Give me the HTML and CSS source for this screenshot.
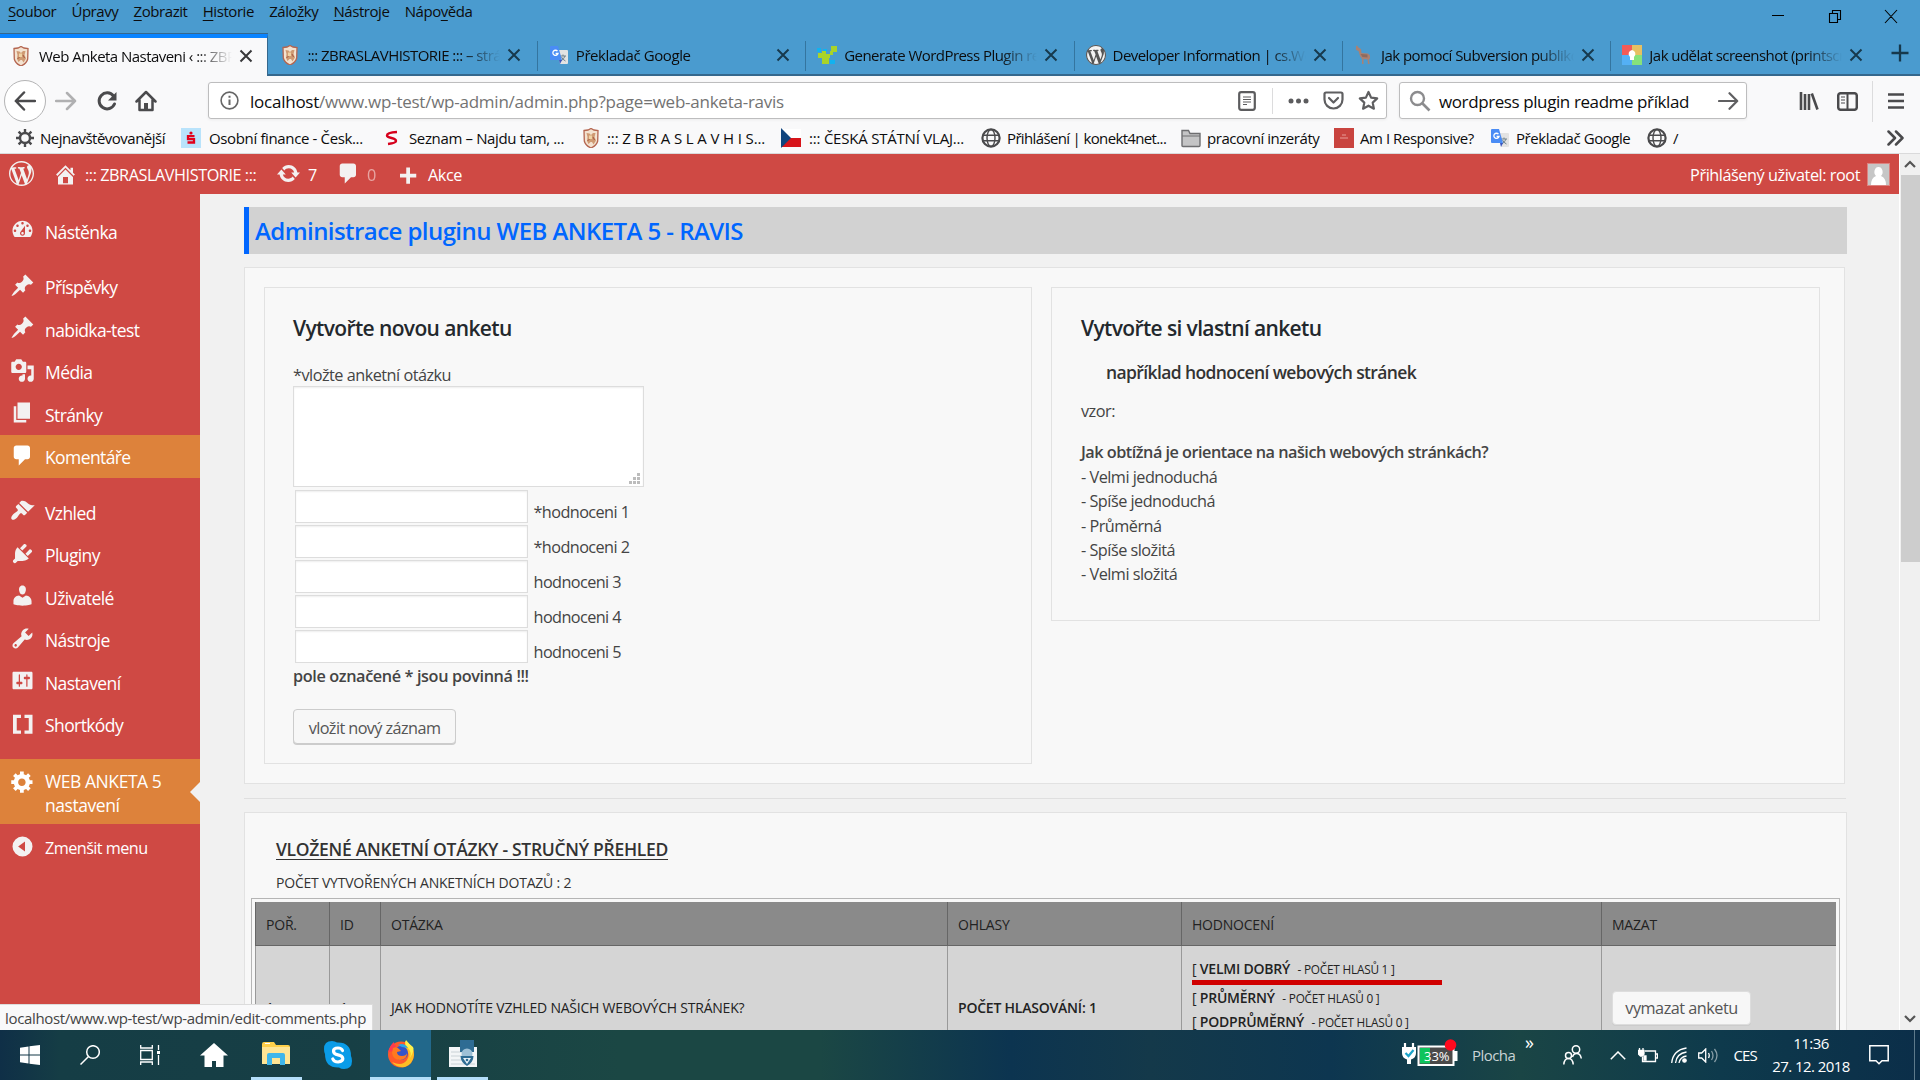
FILE: index.html
```html
<!DOCTYPE html>
<html lang="cs">
<head>
<meta charset="utf-8">
<title>Web Anketa Nastaveni</title>
<link rel="stylesheet" href="styles.css">
</head>
<body>
<svg class="defs" width="0" height="0">
  <symbol id="close" viewBox="0 0 14 14"><path d="M1.5 1.5l11 11M12.500 1.500l-11 11" stroke="currentColor" stroke-width="2" fill="none"/></symbol>
  <symbol id="crest" viewBox="0 0 20 20"><path d="M3 2.500l4-.5 3-1.500 3 1.500 4 .5-.3 10.500q-1 4.500-6.700 7-5.700-2.500-6.700-7z" fill="#f3e2d0" stroke="#b4654f" stroke-width="1.300"/><path d="M5.500 5l3 .5 1.500 1.500 2-2h2.500l-1 4 1.500 3.500-2.500 4-1.500-2.500H9.500l-2 2-1.500-3 .5-4z" fill="#cf9a72"/><path d="M8 7.500h3v3.500H8z" fill="#efd3a4"/><path d="M6.500 13l2-2M12 9l1.500 3" stroke="#a5563f" stroke-width="1"/></symbol>
  <symbol id="gtr" viewBox="0 0 20 20"><path d="M8 5h10q1 0 1 1v12q0 1-1 1h-7z" fill="#e3e3e3"/><path d="M11 11h6M14 9.500V11M16 11q-1 3-4 5M12.500 12q1 2.500 4 4" stroke="#70828c" fill="none"/><path d="M2 1h7l4 14H2q-1 0-1-1V2q0-1 1-1z" fill="#4a8cf5"/><path d="M10 15h3l-2 4z" fill="#3a56c0"/><path d="M8.500 6.200A2.600 2.600 0 1 0 9 8.500H6.600" fill="none" stroke="#fff" stroke-width="1.300"/></symbol>
  <symbol id="globe" viewBox="0 0 20 20"><g fill="none" stroke="#4a4a4c"><circle cx="10" cy="10" r="8.600" stroke-width="2.200"/><ellipse cx="10" cy="10" rx="4" ry="8.500" stroke-width="1.400"/><path d="M2 7.200h16M2 12.800h16" stroke-width="1.400"/></g></symbol>
  <symbol id="wp" viewBox="0 0 20 20"><path d="M20 10c0-5.510-4.490-10-10-10C4.480 0 0 4.490 0 10c0 5.520 4.480 10 10 10 5.510 0 10-4.480 10-10zM7.780 15.370L4.370 6.220c.55-.02 1.170-.08 1.170-.08.5-.06.44-1.130-.06-1.110 0 0-1.450.11-2.370.11-.18 0-.37 0-.58-.01C4.120 2.690 6.870 1.110 10 1.110c2.330 0 4.450.87 6.050 2.340-.68-.11-1.650.39-1.650 1.580 0 .74.45 1.360.9 2.100.35.61.55 1.360.55 2.460 0 1.490-1.400 5-1.400 5l-3.030-8.370c.54-.02.82-.17.82-.17.5-.05.44-1.250-.06-1.220 0 0-1.440.12-2.380.12-.87 0-2.330-.12-2.330-.12-.5-.03-.56 1.200-.06 1.220l.92.08 1.260 3.410zM17.410 10c.24-.64.74-1.870.43-4.250.7 1.290 1.050 2.710 1.050 4.250 0 3.290-1.730 6.240-4.400 7.780.97-2.590 1.940-5.200 2.920-7.780zM6.100 18.090C3.120 16.650 1.110 13.530 1.110 10c0-1.300.23-2.480.72-3.590C3.250 10.300 4.670 14.200 6.100 18.090zm4.030-6.630l2.580 6.980c-.86.29-1.760.45-2.710.45-.79 0-1.570-.11-2.290-.33.81-2.380 1.620-4.740 2.420-7.100z"/></symbol>
  <symbol id="pin" viewBox="0 0 20 20"><path d="M10.440 3.020l1.820-1.820 6.360 6.350-1.830 1.820c-1.050-.68-2.480-.57-3.410.36l-.75.75c-.92.93-1.040 2.350-.35 3.410l-1.830 1.820-2.410-2.410-2.800 2.790c-.42.42-3.380 2.710-3.800 2.290s1.860-3.390 2.280-3.810l2.790-2.790L4.100 9.360l1.830-1.820c1.050.69 2.480.57 3.400-.36l.75-.75c.93-.92 1.050-2.350.36-3.410z"/></symbol>
  <symbol id="bubble" viewBox="0 0 20 20"><path d="M5 2h9c1.100 0 2 .9 2 2v7c0 1.100-.9 2-2 2h-2l-5 5v-5H5c-1.100 0-2-.9-2-2V4c0-1.100.9-2 2-2z"/></symbol>
</svg>

<div class="menubar">
  <nav class="menus"><span><u>S</u>oubor</span><span>Úpr<u>a</u>vy</span><span><u>Z</u>obrazit</span><span><u>H</u>istorie</span><span>Zálo<u>ž</u>ky</span><span><u>N</u>ástroje</span><span>Nápo<u>v</u>ěda</span></nav>
  <svg class="winctl" width="130" height="20" viewBox="0 0 130 20" fill="none" stroke="#000" stroke-width="1.100"><path d="M0 9.500h12M60.500 7.500V4.500h8v9h-3M57.500 7.500h8v9h-8zM113 4l12 13M125 4l-12 13"/></svg>
</div>

<div class="tabs">
  <div class="tab active"><svg class="fav"><use href="#crest"/></svg><span class="label">Web Anketa Nastaveni ‹ ::: ZBRASLAVHISTORIE</span><svg class="x"><use href="#close"/></svg></div>
  <div class="tab nosep"><svg class="fav"><use href="#crest"/></svg><span class="label">::: ZBRASLAVHISTORIE ::: – stránky</span><svg class="x"><use href="#close"/></svg></div>
  <div class="tab"><svg class="fav"><use href="#gtr"/></svg><span class="label short">Překladač Google</span><svg class="x"><use href="#close"/></svg></div>
  <div class="tab"><svg class="fav" viewBox="0 0 20 20"><path d="M0 3h4v4H0zM6 4h4v3H6zM13 15h5v4h-5z" fill="#11b2f0"/><path d="M14 1h6v6h-4v3h-3v3h-1v6H5v-6H1V8h4V6h4v3h4V6h1z" fill="#a9d32a"/></svg><span class="label">Generate WordPress Plugin readme</span><svg class="x"><use href="#close"/></svg></div>
  <div class="tab"><svg class="fav" viewBox="0 0 20 20"><circle cx="10" cy="10" r="9.800" fill="#f3f3f3"/><use href="#wp" fill="#555" width="20" height="20"/></svg><span class="label">Developer Information | cs.WordPress</span><svg class="x"><use href="#close"/></svg></div>
  <div class="tab"><svg class="fav" viewBox="0 0 20 20"><path d="M2 1l1-.5L5 3l2 1 .5 4 6.500.5 2 2v3l-1 1 .5 4.500H14l-.5-4.500-4-.5V19H8v-5l-2-3-1.500-5L2 5z" fill="#a98274"/><path d="M6.500 9l7 .5v3l-5-.5z" fill="#8f6a5d"/></svg><span class="label">Jak pomocí Subversion publikovat</span><svg class="x"><use href="#close"/></svg></div>
  <div class="tab"><svg class="fav" viewBox="0 0 20 20"><path d="M0 0h10v10H0z" fill="#f35b57"/><path d="M10 0h10v10H10z" fill="#e6c063"/><path d="M0 10h10v10H0z" fill="#54b0f5"/><path d="M10 10h10v10H10z" fill="#86e27b"/><path d="M10 5a4 4 0 0 1 2 7v3H8v-3a4 4 0 0 1 2-7z" fill="#fff"/></svg><span class="label">Jak udělat screenshot (printscreen)</span><svg class="x"><use href="#close"/></svg></div>
  <svg class="newtab" viewBox="0 0 18 18"><path d="M9 .5v17M.5 9h17" stroke="#16384c" stroke-width="2.300"/></svg>
</div>

<div class="toolbar">
  <div class="back"><svg width="22" height="20" viewBox="0 0 22 20"><path d="M21 10H2M10 1.500L1.800 10l8.200 8.500" class="ln"/></svg></div>
  <svg class="fwd" width="22" height="20" viewBox="0 0 22 20"><path d="M1 10h19M12 2l8 8-8 8" class="ln faint"/></svg>
  <svg class="reload" width="22" height="22" viewBox="0 0 22 22"><path d="M17.500 6A8 8 0 1 0 18.500 14" class="ln thick"/><path d="M20.500 2v8.500H12z" fill="#4a4a4c"/></svg>
  <svg class="home" width="22" height="22" viewBox="0 0 22 22"><path d="M1.500 11.500L11 2l9.500 9.500M4.500 10v10h13V10" class="ln"/><path d="M9 13h4v7H9z" fill="#4a4a4c"/></svg>
  <div class="urlbar">
    <svg width="19" height="19" viewBox="0 0 19 19"><circle cx="9.500" cy="9.500" r="8.400" fill="none" stroke="#666" stroke-width="1.600"/><path d="M9.500 8.500V14M9.500 4.800v2" stroke="#666" stroke-width="2"/></svg>
    <span class="url"><b>localhost</b>/www.wp-test/wp-admin/admin.php?page=web-anketa-ravis</span>
    <svg class="reader" width="18" height="20" viewBox="0 0 18 20"><rect x="1.200" y="1.200" width="15.600" height="17.600" rx="2" fill="none" stroke="#5c5c5e" stroke-width="2.200"/><path d="M5 6h8M5 8.500h8M5 11h8M5 13.500h4" stroke="#5c5c5e" stroke-width="1.200"/></svg>
    <i class="vsep"></i>
    <svg class="dots" width="21" height="6" viewBox="0 0 21 6" fill="#5c5c5e"><circle cx="3" cy="3" r="2.500"/><circle cx="10.500" cy="3" r="2.500"/><circle cx="18" cy="3" r="2.500"/></svg>
    <svg class="pocket" width="21" height="20" viewBox="0 0 21 20"><path d="M1.500 3q0-1.500 1.500-1.500h15q1.500 0 1.500 1.500v5.500a9 9 0 0 1-18 0z" class="ln grey"/><path d="M6 7l4.500 4.500L15 7" class="ln grey"/></svg>
    <svg class="star" width="21" height="21" viewBox="0 0 21 21"><path d="M10.500 2l2.600 5.600 6.100.8-4.500 4.200 1.200 6.100-5.400-3-5.400 3 1.200-6.100-4.500-4.200 6.100-.8z" class="ln grey"/></svg>
  </div>
  <div class="search">
    <svg width="22" height="22" viewBox="0 0 22 22"><circle cx="8.500" cy="8.500" r="6.500" fill="none" stroke="#8c8c8e" stroke-width="2.400"/><path d="M13.500 13.500l7 7" stroke="#8c8c8e" stroke-width="2.600"/></svg>
    <span>wordpress plugin readme příklad</span>
    <svg class="go" width="21" height="18" viewBox="0 0 21 18"><path d="M1 9h18M11.500 1.200L19.200 9l-7.700 7.800" class="ln grey"/></svg>
  </div>
  <svg class="lib" width="20" height="18" viewBox="0 0 20 18"><path d="M2 0v18M6 2v16M10 2v16M12.800 1.500L18.500 17.500" stroke="#4a4a4c" stroke-width="2.600"/></svg>
  <svg class="side" width="21" height="19" viewBox="0 0 21 19"><rect x="1.200" y="1.200" width="18.600" height="16.600" rx="2.500" class="ln"/><path d="M10.500 1v17" stroke="#4a4a4c" stroke-width="2"/><path d="M4 5h4M4 8h4M4 11h4" stroke="#4a4a4c" stroke-width="1.200"/></svg>
  <i class="vsep tall"></i>
  <svg class="burger" width="16" height="16" viewBox="0 0 16 16"><path d="M0 1.500h16M0 8h16M0 14.500h16" stroke="#4a4a4c" stroke-width="2.300"/></svg>
</div>

<div class="bookmarks">
  <div class="bm b1"><svg viewBox="0 0 20 20"><circle cx="10" cy="10" r="5" fill="none" stroke="#4a4a4c" stroke-width="2.400"/><path d="M10 1v4M10 15v4M1 10h4M15 10h4M3.600 3.600l3 3M13.400 13.400l3 3M16.400 3.600l-3 3M6.600 13.400l-3 3" stroke="#4a4a4c" stroke-width="2.400"/></svg>Nejnavštěvovanější</div>
  <div class="bm b2 wide"><svg viewBox="0 0 20 20"><path d="M0 0h20v20H0z" fill="#b9e3fb"/><path d="M13.500 8.200H7v3h6v3.300H6.500" fill="none" stroke="#e2001a" stroke-width="2.300"/><circle cx="10" cy="5" r="1.600" fill="#e2001a"/></svg>Osobní finance - Česk...</div>
  <div class="bm b2 wide"><svg viewBox="0 0 20 20"><path d="M16 4Q6 4.500 6 7.500q0 1.500 4.500 2.500t4.500 3q0 2-8 3" fill="none" stroke="#d6001c" stroke-width="2.400"/></svg>Seznam – Najdu tam, ...</div>
  <div class="bm b2 spaced"><svg viewBox="0 0 20 20"><use href="#crest"/></svg>::: Z B R A S L A V H I S...</div>
  <div class="bm b2 wide flag"><svg viewBox="0 0 20 20"><path d="M0 1h20v9H0z" fill="#fff"/><path d="M0 10h20v9H0z" fill="#d7141a"/><path d="M0 0l10 10L0 20z" fill="#11457e"/></svg>::: ČESKÁ STÁTNÍ VLAJ...</div>
  <div class="bm b2 tight"><svg><use href="#globe"/></svg>Přihlášení | konekt4net...</div>
  <div class="bm b7"><svg viewBox="0 0 20 20"><path d="M1 17.500V2.500h6.500L9 5.500h10v12q0 1-1 1H2q-1 0-1-1z" fill="#c4c4c5" stroke="#6e6e70" stroke-width="1.400"/><path d="M1 8h18" stroke="#6e6e70"/></svg>pracovní inzeráty</div>
  <div class="bm b8"><svg viewBox="0 0 20 20"><path d="M0 0h20v20H0z" fill="#c9443f"/><path d="M8 7h4M6 10h8" stroke="#e79c98" stroke-width="1.200"/></svg>Am I Responsive?</div>
  <div class="bm b9"><svg><use href="#gtr"/></svg>Překladač Google</div>
  <div class="bm"><svg><use href="#globe"/></svg>/</div>
  <svg class="more" width="17" height="16" viewBox="0 0 17 16"><path d="M1.500 1.500L8 8l-6.500 6.500M9 1.500L15.500 8 9 14.500" class="ln"/></svg>
</div>

<div class="page">
  <div class="viewport">
    <header class="adminbar">
      <svg class="a-wp"><use href="#wp"/></svg>
      <svg class="a-ic a-home" viewBox="0 0 20 20"><path fill-rule="evenodd" d="M16 8.500l1.530 1.530-1.060 1.060L10 4.600l-6.470 6.500-1.060-1.070L10 2.500l4 4v-2h2v4zm-6-2.460l6 5.990V18H4v-5.970zM12 17v-5H8v5h4z"/></svg>
      <span class="a-site">::: ZBRASLAVHISTORIE :::</span>
      <svg class="a-ic" viewBox="0 0 20 20"><path d="M10.200 3.280c3.530 0 6.430 2.610 6.920 6h2.080l-3.500 4-3.500-4h2.320c-.45-1.970-2.210-3.450-4.320-3.450-1.450 0-2.730.71-3.540 1.780L4.950 5.660C6.230 4.200 8.110 3.280 10.200 3.280zm-.4 13.440c-3.520 0-6.430-2.610-6.920-6H.8l3.500-4c1.170 1.330 2.330 2.670 3.500 4H5.480c.45 1.970 2.210 3.450 4.320 3.450 1.450 0 2.730-.71 3.540-1.780l1.710 1.950c-1.280 1.460-3.150 2.380-5.250 2.380z"/></svg>
      <span class="a-num">7</span>
      <svg class="a-ic"><use href="#bubble"/></svg>
      <span class="a-zero">0</span>
      <svg class="a-ic" viewBox="0 0 20 20"><path d="M17 8.500v3h-5v5H9v-5H4v-3h5v-5h3v5z"/></svg>
      <span class="a-act">Akce</span>
      <span class="a-user">Přihlášený uživatel: root</span>
      <svg class="avatar" viewBox="0 0 21 21"><path d="M0 0h21v21H0z" fill="#c6c6c6"/><path d="M10.500 3a4 5 0 0 1 2.500 9q5 2 5 9H3q0-7 5-9a4 5 0 0 1 2.500-9z" fill="#fff"/></svg>
    </header>
    <div class="wrap">
      <aside class="sidebar">
        <div class="mi gap"><svg viewBox="0 0 20 20"><path fill-rule="evenodd" d="M3.760 16h12.480c1.100-1.370 1.760-3.110 1.760-5 0-4.420-3.580-8-8-8s-8 3.580-8 8c0 1.890.66 3.630 1.760 5zM10 4c.55 0 1 .45 1 1s-.45 1-1 1-1-.45-1-1 .45-1 1-1zM6 6c.55 0 1 .45 1 1s-.45 1-1 1-1-.45-1-1 .45-1 1-1zm8 0c.55 0 1 .45 1 1s-.45 1-1 1-1-.45-1-1 .45-1 1-1zm-5.370 5.550L12 7v6c0 1.100-.9 2-2 2s-2-.9-2-2c0-.57.24-1.080.63-1.450zM4 10c.55 0 1 .45 1 1s-.45 1-1 1-1-.45-1-1 .45-1 1-1zm12 0c.55 0 1 .45 1 1s-.45 1-1 1-1-.45-1-1 .45-1 1-1zm-5 3c0-.55-.45-1-1-1s-1 .45-1 1 .45 1 1 1 1-.45 1-1z"/></svg>Nástěnka</div>
        <div class="mi"><svg><use href="#pin"/></svg>Příspěvky</div>
        <div class="mi"><svg><use href="#pin"/></svg>nabidka-test</div>
        <div class="mi"><svg viewBox="0 0 20 20"><path fill-rule="evenodd" d="M13 11V4c0-.55-.45-1-1-1h-1.670L9 1H5L3.670 3H2c-.55 0-1 .45-1 1v7c0 .55.45 1 1 1h10c.55 0 1-.45 1-1zM7 4.500c1.380 0 2.500 1.120 2.500 2.500S8.380 9.500 7 9.500 4.500 8.380 4.500 7 5.620 4.500 7 4.500zM14 6h5v10.500c0 1.380-1.120 2.500-2.500 2.500S14 17.880 14 16.500s1.120-2.500 2.500-2.500c.17 0 .34.02.5.05V9h-3V6zm-4 8.050V13h2v3.500c0 1.380-1.120 2.500-2.500 2.500S7 17.880 7 16.500 8.120 14 9.500 14c.17 0 .34.02.5.05z"/></svg>Média</div>
        <div class="mi"><svg viewBox="0 0 20 20"><path d="M6 15V2h10v13H6zm-1 1h8v2H3V5h2v11z"/></svg>Stránky</div>
        <div class="mi hot gap"><svg><use href="#bubble"/></svg>Komentáře</div>
        <div class="mi"><svg viewBox="0 0 20 20"><path d="M14.480 11.060L7.410 3.990l1.500-1.500c.5-.56 2.300-.47 3.510.32 1.210.8 1.430 1.280 2.910 2.100 1.180.64 2.450 1.260 4.450.85zm-.71.71L6.700 4.700 4.930 6.470c-.39.39-.39 1.020 0 1.410l1.060 1.060c.39.39.39 1.030 0 1.420-.6.6-1.430 1.110-2.210 1.690-.35.26-.7.53-1.010.84C1.430 14.230.4 16.080 1.400 17.070c.99 1 2.840-.03 4.180-1.360.31-.31.58-.66.85-1.020.57-.78 1.080-1.610 1.690-2.210.39-.39 1.020-.39 1.410 0l1.060 1.060c.39.39 1.020.39 1.410 0z"/></svg>Vzhled</div>
        <div class="mi"><svg viewBox="0 0 20 20"><path d="M13.110 4.360L9.870 7.600 8 5.730l3.240-3.240c.35-.34 1.050-.2 1.560.32.52.51.66 1.210.31 1.550zm-8 1.770l.91-1.120 9.010 9.010-1.190.84c-.71.71-2.630 1.160-3.820 1.160H6.140L4.900 17.260c-.59.59-1.540.59-2.120 0-.59-.58-.59-1.530 0-2.120l1.240-1.240v-3.880c0-1.130.4-3.190 1.090-3.890zm7.260 3.970l3.240-3.240c.34-.35 1.040-.21 1.550.31.52.51.66 1.210.31 1.550l-3.240 3.250z"/></svg>Pluginy</div>
        <div class="mi"><svg viewBox="0 0 20 20"><path d="M10 9.250c-2.270 0-2.730-3.440-2.730-3.440C7 4.020 7.820 2 9.970 2c2.160 0 2.980 2.020 2.710 3.810 0 0-.41 3.440-2.680 3.440zm0 2.570L12.720 10c2.390 0 4.520 2.330 4.520 4.530v2.490s-3.650 1.130-7.240 1.130c-3.650 0-7.240-1.130-7.240-1.130v-2.490c0-2.250 1.940-4.480 4.470-4.480z"/></svg>Uživatelé</div>
        <div class="mi"><svg viewBox="0 0 20 20"><path fill-rule="evenodd" d="M16.680 9.770c-1.340 1.340-3.300 1.670-4.950.99l-5.410 6.520c-.99.99-2.590.99-3.580 0s-.99-2.590 0-3.570l6.520-5.420c-.68-1.650-.35-3.610.99-4.950 1.280-1.280 3.120-1.620 4.720-1.060l-2.890 2.890 2.820 2.820 2.860-2.870c.53 1.580.18 3.390-1.080 4.650zM3.810 16.210c.4.39 1.040.39 1.430 0 .4-.4.4-1.040 0-1.430-.39-.4-1.030-.4-1.430 0-.39.39-.39 1.030 0 1.430z"/></svg>Nástroje</div>
        <div class="mi"><svg viewBox="0 0 20 20"><path fill-rule="evenodd" d="M18 16V4c0-.55-.45-1-1-1H3c-.55 0-1 .45-1 1v12c0 .55.45 1 1 1h14c.55 0 1-.45 1-1zM8 11h1c.55 0 1 .45 1 1s-.45 1-1 1H8v1.500c0 .28-.22.5-.5.5s-.5-.22-.5-.5V13H6c-.55 0-1-.45-1-1s.45-1 1-1h1V5.500c0-.28.22-.5.5-.5s.5.22.5.5V11zm5-2h-1c-.55 0-1-.45-1-1s.45-1 1-1h1V5.500c0-.28.22-.5.5-.5s.5.22.5.5V7h1c.55 0 1 .45 1 1s-.45 1-1 1h-1v5.500c0 .28-.22.5-.5.5s-.5-.22-.5-.5V9z"/></svg>Nastavení</div>
        <div class="mi gap"><svg viewBox="0 0 20 20"><path d="M2.400 3h6.400v2.600H5.400v10h3.400v2.600H2.400zM11.600 3h6.400v15.200h-6.400v-2.600H15v-10h-3.400z"/></svg>Shortkódy</div>
        <div class="mi hot current"><svg viewBox="0 0 20 20"><path fill-rule="evenodd" d="M18 12h-2.180c-.17.7-.44 1.350-.81 1.930l1.540 1.540-2.100 2.100-1.540-1.540c-.58.36-1.230.63-1.910.79V19H8v-2.180c-.68-.16-1.330-.43-1.910-.79l-1.540 1.540-2.120-2.120 1.540-1.540c-.36-.58-.63-1.230-.79-1.910H1V9.030h2.170c.16-.7.44-1.350.8-1.940L2.430 5.550l2.100-2.100 1.540 1.540c.58-.37 1.240-.64 1.930-.81V2h3v2.180c.68.16 1.330.43 1.910.79l1.540-1.540 2.120 2.120-1.540 1.540c.36.59.64 1.240.8 1.940H18V12zm-8.500 1.500c1.660 0 3-1.340 3-3s-1.340-3-3-3-3 1.340-3 3 1.340 3 3 3z"/></svg><span>WEB ANKETA 5<br>nastavení</span></div>
        <div class="mi collapse"><svg viewBox="0 0 20 20"><path fill-rule="evenodd" d="M10 2a8 8 0 1 0 0 16 8 8 0 0 0 0-16zM12 6v8l-5.500-4z"/></svg>Zmenšit menu</div>
      </aside>
      <main class="content">
        <h1 class="title">Administrace pluginu WEB ANKETA 5 - RAVIS</h1>
        <section class="panel two">
          <form class="box">
            <h2>Vytvořte novou anketu</h2>
            <label class="q">*vložte anketní otázku</label>
            <div class="area"><svg width="12" height="12" viewBox="0 0 12 12" fill="#bcbcbc"><path d="M8 0h3v3H8zM4 4h3v3H4zM8 4h3v3H8zM0 8h3v3H0zM4 8h3v3H4zM8 8h3v3H8z"/></svg></div>
            <div class="row"><i></i>*hodnoceni 1</div>
            <div class="row"><i></i>*hodnoceni 2</div>
            <div class="row"><i></i>hodnoceni 3</div>
            <div class="row"><i></i>hodnoceni 4</div>
            <div class="row"><i></i>hodnoceni 5</div>
            <p class="req">pole označené * jsou povinná !!!</p>
            <button type="button" class="btn">vložit nový záznam</button>
          </form>
          <div class="box example">
            <h2>Vytvořte si vlastní anketu</h2>
            <h3>například hodnocení webových stránek</h3>
            <p>vzor:</p>
            <p class="sample"><b>Jak obtížná je orientace na našich webových stránkách?</b><br>- Velmi jednoduchá<br>- Spíše jednoduchá<br>- Průměrná<br>- Spíše složitá<br>- Velmi složitá</p>
          </div>
        </section>
        <hr>
        <section class="panel list">
          <h4>VLOŽENÉ ANKETNÍ OTÁZKY - STRUČNÝ PŘEHLED</h4>
          <p class="count">POČET VYTVOŘENÝCH ANKETNÍCH DOTAZŮ : 2</p>
          <div class="frame">
            <div class="tr th"><span>POŘ.</span><span>ID</span><span>OTÁZKA</span><span>OHLASY</span><span>HODNOCENÍ</span><span>MAZAT</span></div>
            <div class="tr td"><span>1.</span><span>1</span><span>JAK HODNOTÍTE VZHLED NAŠICH WEBOVÝCH STRÁNEK?</span><span><b>POČET HLASOVÁNÍ: 1</b></span>
              <div class="votes">
                <p>[ <b>VELMI DOBRÝ</b> <small>- POČET HLASŮ 1 ]</small></p><i class="bar"></i>
                <p>[ <b>PRŮMĚRNÝ</b> <small>- POČET HLASŮ 0 ]</small></p>
                <p>[ <b>PODPRŮMĚRNÝ</b> <small>- POČET HLASŮ 0 ]</small></p>
              </div>
              <span><button type="button" class="btn del">vymazat anketu</button></span></div>
          </div>
        </section>
      </main>
    </div>
  </div>
  <div class="scroll">
    <svg width="12" height="8" viewBox="0 0 12 8"><path d="M1 7l5-5 5 5" fill="none" stroke="#555" stroke-width="2.200"/></svg>
    <i class="thumb"></i>
    <svg class="down" width="12" height="8" viewBox="0 0 12 8"><path d="M1 1l5 5 5-5" fill="none" stroke="#555" stroke-width="2.200"/></svg>
  </div>
  <div class="status">localhost/www.wp-test/wp-admin/edit-comments.php</div>
</div>

<footer class="taskbar">
  <div class="app"><svg width="20" height="20" viewBox="0 0 20 20" fill="#fff"><path d="M0 2.800l8.500-1.300v8H0zM9.500 1.300L20 0v9.500H9.500zM0 10.500h8.500v8L0 17.200zM9.500 10.500H20V20L9.500 18.700z"/></svg></div>
  <div class="app"><svg width="20" height="20" viewBox="0 0 20 20" fill="none" stroke="#fff" stroke-width="1.500"><circle cx="13" cy="7" r="6.300"/><path d="M8.500 11.500L.5 19.500"/></svg></div>
  <div class="app"><svg width="20" height="20" viewBox="0 0 20 20" fill="none" stroke="#fff" stroke-width="1.300"><path d="M.7 0v3h11.600V0M.7 5.500h11.600v9H.7zM.7 20v-3h11.600v3M18.500 0v5M18.500 10v10"/><path d="M17 6h3v3h-3z" fill="#fff" stroke="none"/></svg></div>
  <div class="app w62"><svg width="28" height="24" viewBox="0 0 28 24" fill="#fff"><path d="M14 0l14 12.500h-4.500V24H16v-6h-4v6H4.500V12.500H0z"/></svg></div>
  <div class="app run folder"><svg width="28" height="26" viewBox="0 0 28 26"><path d="M0 3q0-2 2-2h10l2 3h12q2 0 2 2v16H0z" fill="#ffd04a"/><path d="M0 6h28v17H0z" fill="#ffe594"/><path d="M5 14q0-2 2-2h14q2 0 2 2v10h-5v-7h-8v7H5z" fill="#3fb6ea"/><path d="M3 2.500h5" stroke="#fff"/></svg></div>
  <div class="app"><svg width="28" height="28" viewBox="0 0 28 28"><path d="M8 0q3 0 5 1.500Q27 1 27 15q1 2 1 5 0 8-8 8-3 0-5-1.500Q1 27 1 13 0 11 0 8q0-8 8-8z" fill="#0a9ce8"/><path d="M18.500 9.500Q17.500 7 14 7 9.500 7 9.500 10t4.500 3.800 4.800 3.600T14 21q-4 0-5.200-3" fill="none" stroke="#fff" stroke-width="3.200" stroke-linecap="round"/></svg></div>
  <div class="app run lit"><svg width="28" height="28" viewBox="0 0 28 28"><circle cx="14" cy="14.500" r="13" fill="#ff5a2a"/><path d="M1 12Q3 5 7 2q0 3 2 4l-2 5z" fill="#ff3a4e"/><path d="M18 1q9 5 9 14-1 9-9 12-9 1-13-5 10 5 15-2 4-6-2-12z" fill="#ffbe25"/><path d="M19 0q-2 4 2 8t2 10q5-8 3-11-4-3-7-7z" fill="#fff04a"/><circle cx="14" cy="13" r="7" fill="#3354c8"/><path d="M6 8q4-2 6 1l2 2-4 1q0 4 5 4 4 0 5-3 0 7-7 7t-8-7z" fill="#ff7a1f"/><path d="M11 5q6-3 10 3l-6-1z" fill="#28a7e8"/></svg></div>
  <div class="app run last"><svg width="30" height="28" viewBox="0 0 30 28"><path d="M1 7h28v20H1z" fill="#f3f6f7"/><path d="M3 12h12M3 16h12M3 20h12M3 24h24" stroke="#c9d2d6"/><path d="M12 0h14v12H12z" fill="#2e6c93"/><circle cx="19" cy="14" r="5.500" fill="#9dc0d6"/><path d="M12.500 16h13q0 6-6.500 10-6.500-4-6.500-10z" fill="#2e6c93"/><path d="M15 18h8l-4 6z" fill="#e8f2f8"/><circle cx="19" cy="20" r="1.300" fill="#2e6c93"/></svg></div>
  <div class="tray">
    <svg class="t-bat" width="56" height="30" viewBox="0 0 56 30"><path d="M3 4v5M11 4v5" stroke="#fff" stroke-width="2.200"/><path d="M0 8h14v6q0 5-5 6.500V25H5v-4.500Q0 19 0 14z" fill="#fff"/><path d="M3.500 14l3 3 5-6" stroke="#1aa3c9" stroke-width="2.200" fill="none"/><path d="M16.500 7.500h35v18.500h-35z" fill="#4a4a4a" stroke="#fff" stroke-width="2"/><path d="M18 9h10v15.500H18z" fill="#0fc45c"/><path d="M52 12h3.500v10H52z" fill="#fff"/><text x="22" y="21.500" class="pct">33%</text><circle cx="48.500" cy="6" r="5.800" fill="#ff0a1e"/></svg>
    <span class="plocha">Plocha</span><span class="raq">»</span>
    <svg class="people" width="19" height="20" viewBox="0 0 19 20" fill="none" stroke="#fff" stroke-width="1.500"><circle cx="13" cy="4.500" r="3.700"/><path d="M9.500 12q1-3.500 4-3.500 4 0 4.800 5"/><circle cx="5.500" cy="10.500" r="3"/><path d="M.8 19.500q.5-6 4.700-6t4.700 6"/></svg>
    <svg class="up" width="16" height="9" viewBox="0 0 16 9" fill="none" stroke="#fff" stroke-width="1.500"><path d="M.8 8.300L8 1l7.200 7.300"/></svg>
    <svg class="pwr" width="20" height="15" viewBox="0 0 20 15" fill="none" stroke="#fff" stroke-width="1.300"><path d="M7 3h10.500v10.500H4.500V9M18 6h1.500v4H18M1.500 0v3M5 0v3"/><path d="M.5 2.500h5.500V6L4.500 8h-2L.5 6z" fill="#fff"/><path d="M6 8h2v4H6z" fill="#fff"/></svg>
    <svg class="wifi" width="16" height="16" viewBox="0 0 16 16" fill="none" stroke="#fff" stroke-width="1.300"><path d="M.7 16Q2 3 15.500 1M4.500 16Q5.500 6.500 15.500 5M8 16q1-6 7.500-7"/><circle cx="13.500" cy="13.500" r="1.700" fill="#fff"/></svg>
    <svg class="vol" width="21" height="15" viewBox="0 0 21 15" fill="none" stroke="#fff" stroke-width="1.300"><path d="M.7 5h3l4-4v13l-4-4h-3zM10.500 5q1.500 2.500 0 5"/><path d="M13.500 3q3 4.500 0 9M16.500 1q5 6.500 0 13" opacity=".5"/></svg>
    <span class="lang">CES</span>
    <div class="clock"><span>11:36</span><span>27. 12. 2018</span></div>
    <svg class="note" width="20" height="20" viewBox="0 0 20 20" fill="none" stroke="#fff" stroke-width="1.500"><path d="M.8.8h18.400v15H13l-3 3-3-3H.8z"/></svg>
    <i class="edge"></i>
  </div>
</footer>
</body>
</html>
```
FILE: styles.css
```css
*{box-sizing:border-box}
body{margin:0;width:1920px;height:1080px;overflow:hidden;display:flex;flex-direction:column;font:15px/20px "Open Sans","Noto Sans",sans-serif;letter-spacing:-.03em;color:#0c0c0d;background:#f9f9fa;white-space:nowrap}
svg{flex:none;display:block}
.defs{position:absolute}
h1,h2,h3,h4,p{margin:0}
.ln{fill:none;stroke:#4a4a4c;stroke-width:2.500;stroke-linecap:round;stroke-linejoin:round}
.ln.thick{stroke-width:3}
.ln.faint{stroke:#b0b0b1}
.ln.grey{stroke:#5f5f61;stroke-width:2.200}

.menubar{height:34px;flex:none;background:#4a9bcf;display:flex;justify-content:space-between;padding:1px 21px 0 8px}
.menus{display:flex;gap:15.200px;letter-spacing:-.029em}
.menus u{text-underline-offset:3px}
.winctl{margin-top:5px;margin-right:-3px}

.tabs{height:42px;flex:none;background:#4a9bcf;display:flex;border-bottom:2px solid #35688d}
.tab{width:268.400px;height:40px;flex:none;display:flex;align-items:center;padding:2px 0 0 12px;background:linear-gradient(#34759f,#34759f) 0 7px/1px 30px no-repeat}
.tab.nosep{background:none}
.tab.active{height:42px;background:#f9f9fa;border-top:4px solid #0a84ff;border-right:1px solid #35688d;box-shadow:0 -1px 0 #35688d;padding:0 0 3px 11px}
.active .label{margin-left:8px}
.fav{width:20px;height:20px}
.label{width:193px;margin:0 7px 0 7px;overflow:hidden;-webkit-mask-image:linear-gradient(90deg,#000 156px,transparent 193px);mask-image:linear-gradient(90deg,#000 156px,transparent 193px);letter-spacing:-.036em}
.label.short{letter-spacing:-.028em}
.x{width:14px;height:14px;color:#17394d}
.active .x{color:#38383a}
.newtab{width:18px;height:18px;margin:10px 0 0 12px}

.toolbar{height:50px;flex:none;display:flex;align-items:center;padding-left:4px}
.back{width:42px;height:42px;border:1px solid #b4b4b5;border-radius:50%;background:#fff;display:flex;align-items:center;justify-content:center}
.fwd{margin-left:9px}
.reload{margin-left:19px}
.home{margin-left:17px}
.urlbar,.search{height:37px;background:#fff;border:1px solid #bdbdbe;border-radius:3px;display:flex;align-items:center;box-shadow:0 1px 3px rgba(0,0,0,.06);font-size:17px;line-height:24px;margin-top:-1px}
.urlbar{width:1179px;margin-left:51px;padding-left:11px}
.url{margin-left:11px;padding-top:2px;width:988px;color:#737373;letter-spacing:-.0142em}
.url b{font-weight:400;color:#0c0c0d}
.vsep{width:1px;height:26px;background:#dcdcdd;margin-left:16px}
.dots{margin-left:15px}
.pocket{margin-left:14px}
.star{margin-left:14px}
.search{width:348px;margin-left:12px;padding-left:9px;letter-spacing:-.0237em}
.search span{margin-left:8px;padding-top:2px;width:279px}
.lib{margin-left:52px}
.side{margin-left:18px}
.vsep.tall{height:41px;margin-left:14px}
.burger{margin-left:15px}

.bookmarks{height:28px;flex:none;display:flex;align-items:center;padding:0 16px 4px 15px;border-bottom:1px solid #dadadb}
.bm{display:flex;align-items:center;gap:6px;flex:none;height:20px}
.bm svg{width:20px;height:20px}
.bm.wide{gap:8px;letter-spacing:-.024em}
.bm.spaced{letter-spacing:-.008em}
.bm.flag{letter-spacing:-.014em}
.bm.tight{letter-spacing:-.043em}
.b1{width:166px;letter-spacing:-.034em}
.b2{width:200px}
.b7{width:153px}
.b8{width:156px}
.b9{width:157px}
.b1.bm{gap:5px}
.more{margin-left:auto}

.page{height:876px;flex:none;display:flex;position:relative;overflow:hidden}
.viewport{width:1899px;display:flex;flex-direction:column}
.adminbar{height:40px;flex:none;background:#cf4944;color:#fff;fill:#f3f1f1;display:flex;align-items:center;padding:2px 9px 0 9px;font-size:16.250px}
.a-wp{width:25px;height:25px;margin-top:-3px}
.a-ic{width:25px;height:25px}
.a-home{margin:-2px 7px 0 19px}
.a-site{width:191px}
.a-site+.a-ic{margin-top:-3px}
.a-num{margin-left:7px;width:28px}
.a-num+.a-ic{margin-top:-3px}
.a-zero{margin-left:6px;width:28px;opacity:.5}
.a-act{margin-left:8px}
.a-user{margin-left:auto}
.avatar{width:21px;height:21px;margin:-2px 1px 0 8px;outline:1px solid #dc8380}
.wrap{display:flex;height:836px}
.sidebar{width:200px;background:#cf4944;padding-top:15.500px;flex:none;color:#fff;fill:#f3f1f1;font-size:17.500px;letter-spacing:-.034em}
.mi{height:42.500px;display:flex;align-items:center;gap:10px;padding:1.500px 0 0 10px}
.mi svg{width:25px;height:25px;margin-top:-4px}
.mi.gap{margin-bottom:13.200px}
.hot{background:#dd823b;fill:#fff}
.current{height:65px;line-height:24px;letter-spacing:-.025em;position:relative;align-items:flex-start;padding-top:10px}
.current svg{margin-top:0}
.current:after{content:"";position:absolute;right:0;top:23px;border:10px solid transparent;border-right-color:#f1f1f1;border-left:0}
.collapse{font-size:16.250px;letter-spacing:-.035em;height:47px}

.content{flex:1;background:#f1f1f1;padding:13px 52px 0 44px;color:#444;font-size:16.250px;line-height:24.375px}
.title{width:1603px;height:47px;background:#d2d2d2;border-left:5px solid #06f;padding:0 0 0 6px;font-size:24px;line-height:48px;font-weight:600;color:#06f;letter-spacing:-.0235em}
.panel{background:#f8f8f8;border:1px solid #e2e2e2}
.two{width:1601px;height:517px;margin-top:13px;padding:19px;display:flex;gap:19px;align-items:flex-start}
.box{width:768px;height:477px;border:1px solid #e2e2e2;padding:25px 28px 0;letter-spacing:-.031em}
.example{width:769px;height:334px;padding-left:29px}
h2{font-size:21px;line-height:30px;font-weight:600;color:#23282d;letter-spacing:-.030em}
.q{display:block;margin-top:19.500px}
.area{width:351px;height:101px;background:#fff;border:1px solid #ddd;box-shadow:inset 0 1px 2px rgba(0,0,0,.07);margin:-1px 0 3px;display:flex;align-items:flex-end;justify-content:flex-end;padding:0 2px 1px}
.row{height:35px;display:flex;align-items:flex-start;line-height:44px;padding-left:2px;letter-spacing:-.036em}
.row i{width:233px;height:33px;margin-right:5.500px;background:#fff;border:1px solid #ddd;box-shadow:inset 0 1px 2px rgba(0,0,0,.07)}
.req{font-weight:600;margin-top:-1px;letter-spacing:-.0235em}
.btn{display:block;font:inherit;letter-spacing:-.031em;color:#555;background:#f7f7f7;border:1px solid #ccc;border-radius:4px;box-shadow:0 1px 0 #ccc;padding:1px 0 0;text-align:center}
.req+.btn{width:163px;height:35px;margin-top:21px;padding-top:2px;letter-spacing:-.036em}
h3{font-size:17.500px;line-height:26px;font-weight:600;color:#333;letter-spacing:-.035em;margin:15.500px 0 14.500px 25px}
.sample{margin-top:17px}
b{font-weight:600}
hr{width:1602px;border:0;border-top:1px solid #dfdfdf;margin:14px 0 13px}
.list{width:1603px;height:300px;padding:24px 6px 0;font-size:14px;color:#333;letter-spacing:-.0155em}
h4{font-size:17.500px;line-height:24px;font-weight:600;color:#333;letter-spacing:-.0166em;margin-left:25px;text-decoration:underline;text-underline-offset:3px;text-decoration-thickness:1px}
.count{margin:10px 0 3px 25px;height:24px}
.frame{width:1589px;border:1px solid #b5b5b5;padding:3px;height:260px}
.tr{display:grid;grid-template-columns:74px 51px 567px 234px 420px 1fr;background:#d5d5d5;border-left:1px solid #999}
.tr>*{border-right:1px solid #999;padding-left:10px;display:flex;align-items:center}
.tr>:last-child{border-right:0}
.th{height:44px;background:#8a8a8a;border-bottom:1px solid #666;border-color:#666;color:#222}
.th>*{border-color:#666;padding-top:3px}
.td{height:124px;color:#222}
.tr>.votes{display:block;padding-top:11px}
.votes p{height:24px}
.votes b{margin-right:4px}
.votes small{font-size:11.800px}
.bar{display:block;width:250px;height:5px;background:#d00000;margin-top:-1px;margin-bottom:1px}
.del{width:139px;height:34px;border-color:#ddd;font-size:16.250px}

.scroll{width:21px;background:#f0f0f0;border-left:1px solid #fff;display:flex;flex-direction:column;align-items:center;padding:6px 0 7px}
.thumb{width:19px;height:387px;background:#cdcdcd;margin-top:7px}
.down{margin-top:auto}
.status{position:absolute;left:0;bottom:0;height:26px;width:373px;background:#f9f9fa;border:1px solid #dcdcdc;border-width:1px 1px 0 0;padding:2px 0 0 5px;line-height:22px;color:#444;letter-spacing:-.0225em}

.taskbar{height:50px;flex:none;display:flex;background:linear-gradient(90deg,#0f2f47 0,#153d45 60px,#173f45 350px,#1b4744 620px,#1b4744 820px,#0c3450 1010px,#14394a 1150px,#0d3650 1330px,#1a4545 1520px,#0e3a4c 1720px,#0b2e49 1920px);color:#fff}
.app{width:60px;display:flex;align-items:center;justify-content:center}
.app.w62{width:68px}
.app.run{border-bottom:3px solid #b3defa}
.app.run svg{margin-top:1px}
.app.folder{width:51px;margin:0 7px 0 3px}
.folder svg{margin-left:-2px}
.folder+.app svg{margin-left:-2px}
.app.lit{width:61px;background:#22688b;margin-left:1px}
.app.last{width:51px;margin-left:6px}
.tray{margin-left:auto;display:flex;align-items:center;position:relative}
.t-bat{margin-top:-3px}
.pct{font-size:13px;fill:#fff;letter-spacing:0}
.plocha{margin-left:14px;width:53px;color:#c9d3d6;margin-top:-1px;letter-spacing:-.036em}
.raq{width:38px;margin-top:-26px;font-size:18px}
.up{margin-left:28px}
.pwr{margin-left:12px}
.wifi{margin-left:13px}
.vol{margin-left:11px}
.lang{margin-left:14.500px;width:25.500px;letter-spacing:-.06em}
.clock{width:80px;margin-left:12px;display:flex;flex-direction:column;align-items:center;line-height:23px;letter-spacing:-.038em}
.note{margin-left:18px}
.edge{width:1px;height:50px;background:#5d7a8b;margin:0 5px 0 25px}
```
